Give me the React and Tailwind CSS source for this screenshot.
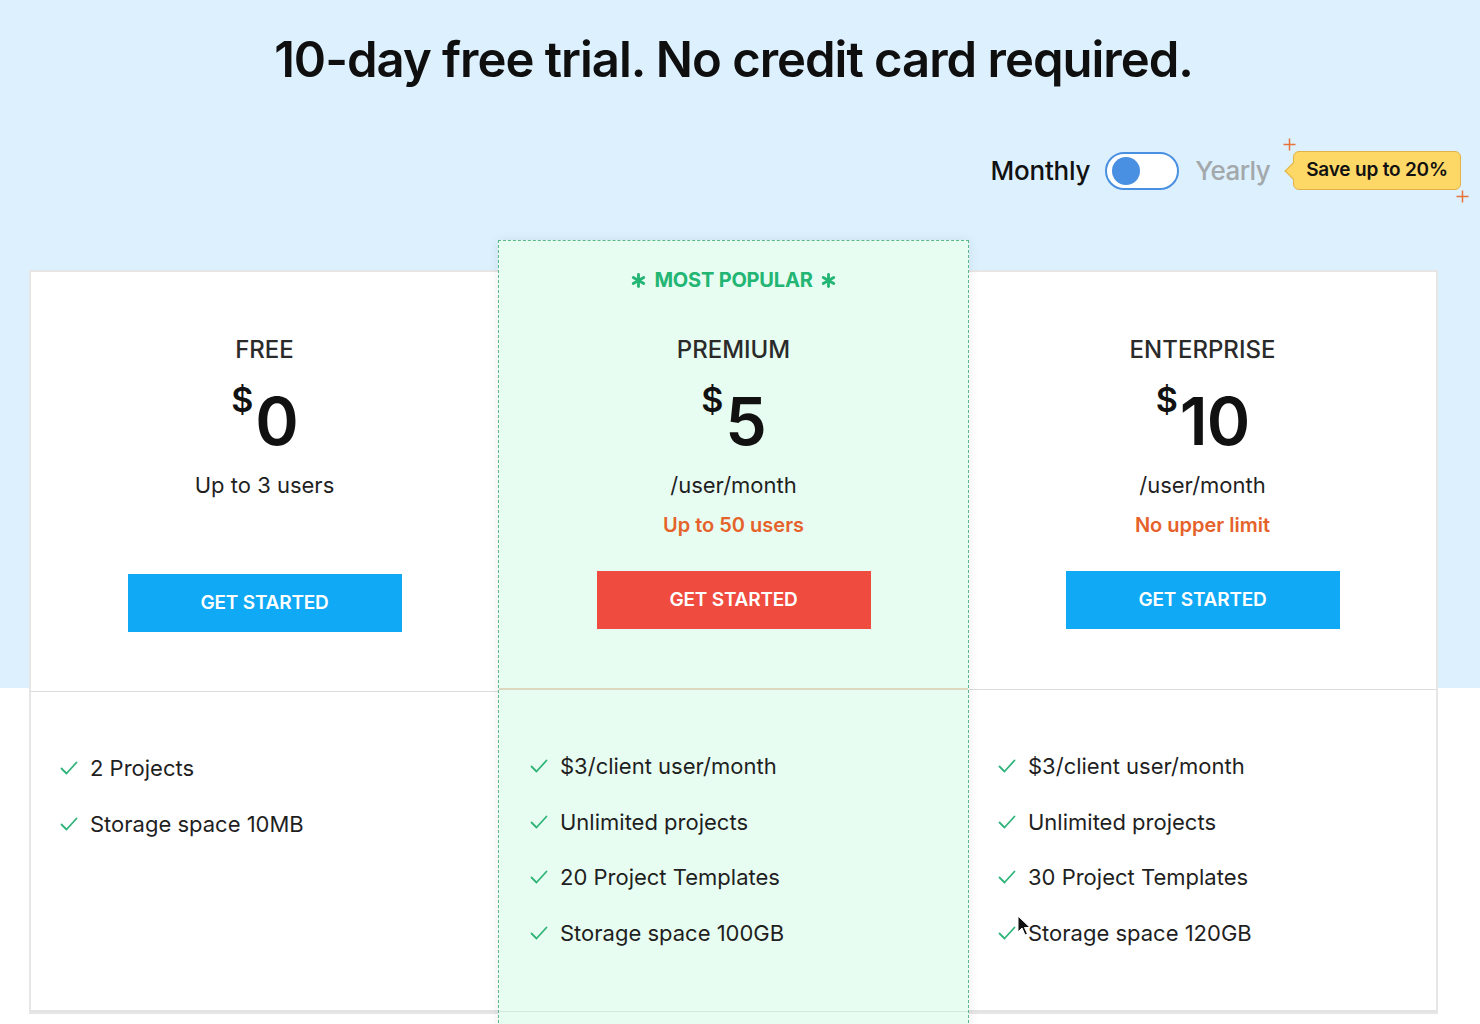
import React from "react";

const Check = () => (
  <svg width="18" height="14" viewBox="0 0 18 14" fill="none" className="shrink-0">
    <path d="M1.5 7.5 L6.5 12.5 L16.5 1.5" stroke="#2fb47a" strokeWidth="1.8" strokeLinecap="round" strokeLinejoin="round" />
  </svg>
);

const Plus = ({ className }) => (
  <svg width="13" height="13" viewBox="0 0 13 13" className={className}>
    <path d="M6.5 0.5 V12.5 M0.5 6.5 H12.5" stroke="#e7733a" strokeWidth="1.5" />
  </svg>
);

const Star = () => (
  <svg width="15" height="15" viewBox="0 0 16 16" className="shrink-0">
    <g stroke="#22b573" strokeWidth="3" strokeLinecap="round">
      <path d="M8 1.5 V14.5" />
      <path d="M2.4 4.75 L13.6 11.25" />
      <path d="M2.4 11.25 L13.6 4.75" />
    </g>
  </svg>
);

const Features = ({ items }) => (
  <ul className="flex flex-col gap-[25.7px]">
    {items.map((t) => (
      <li key={t} className="flex items-center gap-[12px] text-[22px] leading-[30px] text-[#1f1f1f]">
        <Check />
        <span>{t}</span>
      </li>
    ))}
  </ul>
);

const Price = ({ value }) => (
  <div className="flex items-start text-[#111]">
    <span className="text-[34px] leading-none font-semibold mt-[-5px] mr-[2px]">$</span>
    <span className="text-[66px] leading-none font-semibold tracking-[-1px]">{value}</span>
  </div>
);

export default function App() {
  return (
    <div
      className="relative min-h-[1024px] w-[1480px] overflow-hidden bg-[linear-gradient(to_bottom,#ddf0fe_0px,#ddf0fe_688px,#ffffff_688px)] text-[#111]"
      style={{ fontFamily: "Inter, 'Noto Sans', sans-serif" }}
    >
      <h1 className="pt-[30px] pr-[13px] text-center text-[49px] leading-[60px] font-semibold tracking-[-1px] text-[#0f0f0f]">
        10-day free trial. No credit card required.
      </h1>

      <div className="mt-[61px] flex items-center justify-end pr-[19px]">
        <span className="text-[26px] font-medium text-[#111] tracking-[-0.2px]">Monthly</span>
        <div className="ml-[15px] flex h-[38px] w-[74px] items-center rounded-full border-2 border-[#4a90e2] bg-white pl-[5px]">
          <div className="h-[28px] w-[28px] rounded-full bg-[#4a90e2]" />
        </div>
        <span className="ml-[16px] text-[26px] font-medium text-[#a3a8ab] tracking-[-0.6px]">Yearly</span>
        <div className="relative ml-[23px] flex h-[39px] w-[168px] items-center justify-center rounded-[6px] border border-[#e2b14a] bg-[#fdd866]">
          <div className="absolute left-[-7px] top-[13px] h-[12px] w-[12px] rotate-45 border-b border-l border-[#e2b14a] bg-[#fdd866]" />
          <span className="relative text-[19px] font-semibold text-[#111] tracking-[-0.2px]">Save up to 20%</span>
          <Plus className="absolute left-[-11px] top-[-14px]" />
          <Plus className="absolute right-[-9px] bottom-[-14px]" />
        </div>
      </div>

      <div className="mt-[50px] flex items-start px-[29px]">
        {/* FREE */}
        <div className="mt-[30px] w-[469px] border-2 border-r-0 border-[#e6e6e6] bg-white">
          <div className="flex h-[420px] flex-col items-center pt-[62px] border-b border-[#dcdcdc]">
            <div className="text-[24px] leading-[32px] font-medium text-[#2a2a2a]">FREE</div>
            <div className="mt-[22px]"><Price value="0" /></div>
            <div className="mt-[16px] text-[22px] leading-[30px] text-[#1f1f1f]">Up to 3 users</div>
            <button className="mt-[74px] h-[58px] w-[274px] bg-[#10a9f5] text-[19px] font-semibold text-white tracking-[-0.2px]">
              GET STARTED
            </button>
          </div>
          <div className="h-[320px] pl-[29px] pt-[61px] border-b-2 border-[#e3e3e3]">
            <Features items={["2 Projects", "Storage space 10MB"]} />
          </div>
        </div>

        {/* PREMIUM */}
        <div className="relative z-10 w-[471px] border border-dashed border-[#5bb88b] bg-[#e8fdf1] shadow-[0_0_10px_rgba(0,0,0,0.08)]">
          <div className="flex h-[449px] flex-col items-center border-b-2 border-[#ddd7bf]">
            <div className="mt-[25px] flex items-center gap-[8px] text-[20px] leading-[28px] font-bold text-[#22b573] tracking-[-0.2px]">
              <Star />
              <span>MOST POPULAR</span>
              <Star />
            </div>
            <div className="mt-[40px] text-[24px] leading-[32px] font-medium text-[#2a2a2a]">PREMIUM</div>
            <div className="mt-[22px]"><Price value="5" /></div>
            <div className="mt-[16px] text-[22px] leading-[30px] text-[#1f1f1f]">/user/month</div>
            <div className="mt-[11px] text-[20px] leading-[28px] font-semibold text-[#e5622a]">Up to 50 users</div>
            <button className="mt-[32px] h-[58px] w-[274px] bg-[#ef4b3f] text-[19px] font-semibold text-white tracking-[-0.2px]">
              GET STARTED
            </button>
          </div>
          <div className="h-[322px] pl-[31px] pt-[61px] border-b border-[#d6e6dc]">
            <Features items={["$3/client user/month", "Unlimited projects", "20 Project Templates", "Storage space 100GB"]} />
          </div>
          <div className="h-[20px]" />
        </div>

        {/* ENTERPRISE */}
        <div className="mt-[30px] w-[469px] border-2 border-l-0 border-[#e6e6e6] bg-white">
          <div className="flex h-[418px] flex-col items-center pt-[62px] border-b border-[#dcdcdc]">
            <div className="text-[24px] leading-[32px] font-medium text-[#2a2a2a]">ENTERPRISE</div>
            <div className="mt-[22px]"><Price value="10" /></div>
            <div className="mt-[16px] text-[22px] leading-[30px] text-[#1f1f1f]">/user/month</div>
            <div className="mt-[11px] text-[20px] leading-[28px] font-semibold text-[#e5622a]">No upper limit</div>
            <button className="mt-[32px] h-[58px] w-[274px] bg-[#10a9f5] text-[19px] font-semibold text-white tracking-[-0.2px]">
              GET STARTED
            </button>
          </div>
          <div className="h-[322px] pl-[29px] pt-[61px] border-b-2 border-[#e3e3e3]">
            <Features items={["$3/client user/month", "Unlimited projects", "30 Project Templates", "Storage space 120GB"]} />
          </div>
        </div>
      </div>

      <svg className="absolute left-[1017px] top-[915px] z-20" width="14" height="22" viewBox="0 0 14 22">
        <path d="M1 1 L1 17 L5 13 L8 20 L10.5 19 L7.5 12.5 L13 12.5 Z" fill="#111" stroke="#fff" strokeWidth="1" />
      </svg>
    </div>
  );
}
